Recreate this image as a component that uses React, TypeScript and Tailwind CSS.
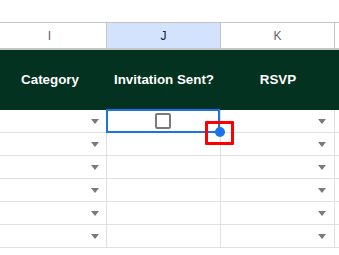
import React from "react";

const font = { fontFamily: '"Liberation Sans", Arial, sans-serif' };

function Arrow() {
  return (
    <div className="w-0 h-0 border-l-[4.5px] border-r-[4.5px] border-t-[5px] border-l-transparent border-r-transparent border-t-[#7a7a7a]" />
  );
}

function DataRow({ first }: { first?: boolean }) {
  return (
    <div className={`flex border-b border-[#e0e0e0] ${first ? "h-[23px]" : "h-[23px]"}`}>
      <div className="w-[114px] shrink-0 border-r border-[#e0e0e0] flex items-center justify-end pr-[7px]">
        <Arrow />
      </div>
      <div className="w-[114px] shrink-0 border-r border-[#e0e0e0] relative flex items-center justify-center">
        {first && (
          <>
            <div className="w-[16px] h-[16px] border-2 border-[#7a7a7a] rounded-[2px] -ml-[1px]" />
            <div className="absolute -left-[1px] -top-[1px] right-0 -bottom-[1px] border-2 border-[#1a73e8]" />
            <div className="absolute -right-[5px] -bottom-[5px] w-[10px] h-[10px] rounded-full bg-[#1a73e8] z-10" />
            <div className="absolute -right-[14px] -bottom-[13px] w-[29px] h-[24px] border-[3px] border-[#ff0000] rounded-[1px] z-20" />
          </>
        )}
      </div>
      <div className="w-[114px] shrink-0 border-r border-[#e0e0e0] flex items-center justify-end pr-[8px]">
        <Arrow />
      </div>
      <div className="flex-1" />
    </div>
  );
}

export default function App() {
  return (
    <div className="w-[339px] h-[255px] overflow-hidden bg-white" style={font}>
      <div className="ml-[-7px] w-[360px] pt-[22px]">
        <div className="flex h-[28px] border-t border-b-2 border-[#c4c4c4] text-[12px]">
          <div className="w-[114px] shrink-0 border-r border-[#c4c4c4] flex items-center justify-center text-[#5f6368]">I</div>
          <div className="w-[114px] shrink-0 border-r border-[#c4c4c4] bg-[#d3e3fd] flex items-center justify-center text-[#0b1f3a]">J</div>
          <div className="w-[114px] shrink-0 border-r border-[#c4c4c4] flex items-center justify-center text-[#5f6368]">K</div>
          <div className="flex-1" />
        </div>
        <div className="flex h-[60px] bg-[#033220] text-white font-bold text-[13.33px]">
          <div className="w-[114px] shrink-0 flex items-center justify-center">Category</div>
          <div className="w-[114px] shrink-0 flex items-center justify-center">Invitation Sent?</div>
          <div className="w-[114px] shrink-0 flex items-center justify-center">RSVP</div>
          <div className="flex-1" />
        </div>
        <DataRow first />
        <DataRow />
        <DataRow />
        <DataRow />
        <DataRow />
        <DataRow />
      </div>
    </div>
  );
}
